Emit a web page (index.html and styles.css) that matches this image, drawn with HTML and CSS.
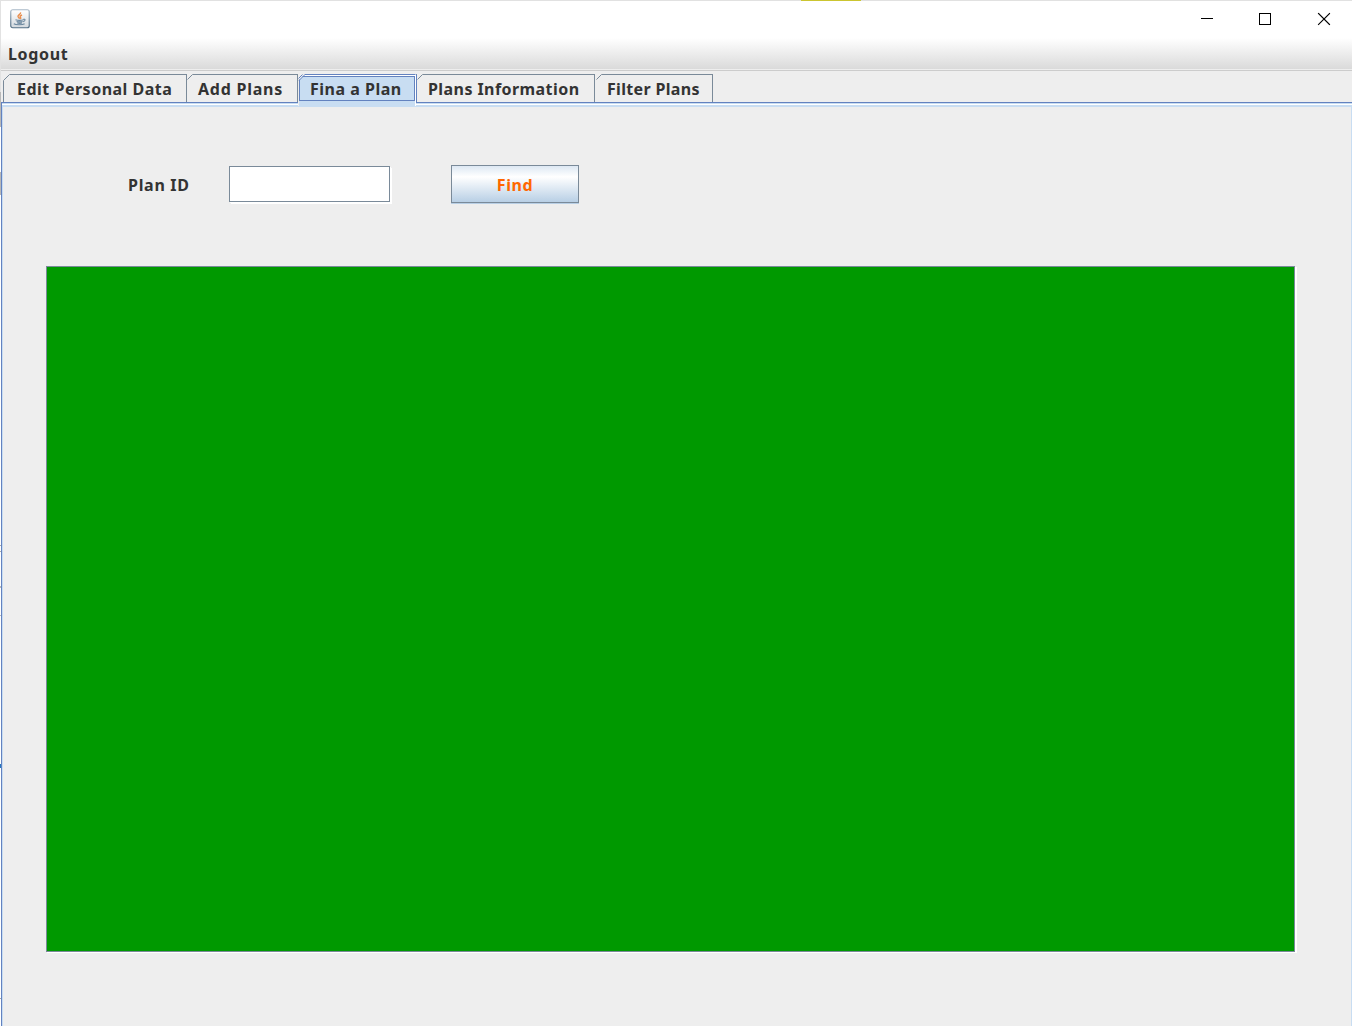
FILE: index.html
```html
<!DOCTYPE html>
<html lang="en">
<head>
<meta charset="utf-8">
<title>Find a Plan</title>
<link rel="stylesheet" href="styles.css">
</head>
<body>
<div class="screen">
  <div class="edge"></div>
  <div class="window">
    <header class="titlebar">
      <svg class="java" width="20" height="20" viewBox="0 0 20 20">
        <defs><linearGradient id="g" x1="0" y1="0" x2="0" y2="1"><stop offset="0" stop-color="#fff"/><stop offset="1" stop-color="#d3d9de"/></linearGradient>
        <linearGradient id="b" x1="0" y1="0" x2="0" y2="1"><stop offset="0" stop-color="#a9b9c7"/><stop offset="1" stop-color="#536f85"/></linearGradient></defs>
        <rect x=".75" y=".75" width="18.5" height="18" rx="2" fill="url(#g)" stroke="url(#b)" stroke-width="1.2"/>
        <path d="M10.5 3.4C11.2 5 7.8 6 8 7.5c.1 1 1.3 1.5 1.6 2.3M12 6C9.8 6.9 9.9 7.8 10.5 8.5c.5.6.2 1-.3 1.4" fill="none" stroke="#e98d4c" stroke-width="1.4"/>
        <path d="M5.5 10.8c2 .6 6 .6 8 0M6.6 12.4c1.8.6 4.3.6 6 0M7.2 13.9c1.5.5 3.5.5 4.8 0M13.3 10.4c2.4-.7 2.3 1.6-.2 2.3M3.8 14.7c1.8 1.4 8.8 1.4 10.8.1" fill="none" stroke="#6b879e" stroke-width="1.1"/>
      </svg>
      <svg class="controls" width="132" height="14" viewBox="0 0 132 14" fill="none" stroke="#000" shape-rendering="crispEdges">
        <path d="M0 6.5h12"/><rect x="58.5" y="1.5" width="11" height="11"/>
        <path d="M117.5 1.5l11 11M128.5 1.5l-11 11" shape-rendering="auto" stroke-width="1.1" stroke-linecap="square"/>
      </svg>
    </header>
    <nav class="menubar"><span class="label logout">Logout</span></nav>
    <div class="tabs">
      <div class="tab t1"><svg class="cut" width="7" height="7"><path d="M0 0H7L0 7Z" fill="#eee"/><path d="M.5 6.5L6.5.5" stroke="#7a8a99"/></svg><span class="label">Edit Personal Data</span></div>
      <div class="tab t2"><svg class="cut" width="6" height="6"><path d="M0 0H6L0 6Z" fill="#eee"/><path d="M.5 5.5L5.5 .5" stroke="#7a8a99"/></svg><span class="label">Add Plans</span></div>
      <div class="tab t3 active"><svg class="cut" width="8" height="8"><path d="M0 0H7L0 7Z" fill="#eee"/><path d="M.5 4.5L4.5 .5M1 6.5L6.5 1" stroke="#6382bf"/></svg><div class="focus"><span class="label">Fina a Plan</span></div></div>
      <div class="tab t4"><svg class="cut" width="6" height="6"><path d="M0 0H6L0 6Z" fill="#eee"/><path d="M.5 5.5L5.5 .5" stroke="#7a8a99"/></svg><span class="label">Plans Information</span></div>
      <div class="tab t5"><svg class="cut" width="7" height="6"><path d="M0 0H7L1 6H0Z" fill="#eee"/><path d="M1.5 5.5L6.5 .5" stroke="#7a8a99"/></svg><span class="label">Filter Plans</span></div>
    </div>
    <main class="panel">
      <div class="form">
        <label class="label plan" for="plan-id">Plan ID</label>
        <input class="field" id="plan-id" type="text">
        <button class="find" type="button"><span class="label">Find</span></button>
      </div>
      <div class="results"></div>
    </main>
  </div>
  <div class="accent"></div>
</div>
</body>
</html>
```
FILE: styles.css
```css
* { box-sizing: border-box; }
body { margin: 0; overflow: hidden; background: #eee; color: #333; font: 700 16px "Noto Sans", sans-serif; }
.screen { position: relative; display: flex; width: 1352px; height: 1026px; }
.edge { width: 1px; background: linear-gradient(#e2e2e2 0 92px, #b8b8b8 92px 127px, #fff 127px 172px, #b8b8b8 172px 195px, #fff 195px 545px, #aaa 545px 546px, #fff 546px 551px, #aaa 551px 552px, #fff 552px 586px, #bbb 586px 588px, #fff 588px 615px, #bbb 615px 616px, #fff 616px 764px, #2878c0 764px 768px, #fff 768px 998px, #aaa 998px 999px, #fff 999px); }
.window { width: 1351px; display: flex; flex-direction: column; }
.titlebar { height: 38px; border-top: 1px solid #e1e1e1; background: #fff; display: flex; justify-content: space-between; padding: 8px 19px 0 9px; }
.controls { margin-top: 3px; }
.menubar { height: 33px; padding: 5px 0 0 7px; background: linear-gradient(#fff, #dadada 31px, #eee 31px 32px, #ccc 32px); }
.label { display: block; white-space: nowrap; line-height: 22px; letter-spacing: .6px; }
.logout { letter-spacing: .68px; }
.tabs { height: 31px; padding: 3px 0 0 2px; display: flex; background: #eee; }
.tab { position: relative; height: 28px; border-top: 1px solid #7a8a99; border-right: 1px solid #7a8a99; padding: 3px 0 0 11px; }
.cut { position: absolute; left: 0; top: -1px; }
.t1 { width: 184px; padding-left: 13px; border-left: 1px solid #7a8a99; }
.t1 .cut { left: -1px; }
.t1 .label { letter-spacing: .5px; }
.t2 { width: 111px; }
.t2 .label { letter-spacing: .75px; }
.t3 { width: 118px; }
.t3 .label { letter-spacing: .5px; }
.t4 { width: 179px; border-left: 1px solid #6382bf; }
.t4 .label { letter-spacing: .43px; }
.t5 { width: 118px; padding-left: 12px; }
.t5 .label { letter-spacing: .33px; }
.active { z-index: 1; height: 32px; padding: 1px 0 0 1px; background: linear-gradient(#fff 1px, transparent 1px), linear-gradient(90deg, #eee 1px, #c8ddf2 1px); border-top: 1px solid #6382bf; border-right: 1px solid #fff; }
.focus { width: 116px; height: 25px; border: 1px solid #6382bf; padding: 1px 0 0 10px; }
.panel { flex: 1; border-left: 1px solid #6382bf; background: linear-gradient(90deg, #c8ddf2 0 1px, transparent 1px 1349px, #c8ddf2 1349px) 0 5px no-repeat, linear-gradient(#6382bf 0 1px, #c8ddf2 1px 2px, #fff 2px 3px, #c8ddf2 3px 5px, #eee 5px); }
.form { display: flex; align-items: flex-start; padding: 63px 0 0 126px; height: 164px; }
.plan { width: 101px; margin-top: 9px; letter-spacing: .7px; }
.field { width: 161px; height: 36px; margin-top: 1px; border: 1px solid #7a8a99; background: #fff; padding: 0 5px; font: inherit; outline: 0; box-shadow: 1px 1px #fff, 2px 2px #fff; }
.find { width: 128px; height: 38px; margin-left: 61px; padding: 1px 0 0; border: 1px solid #7a8a99; background: linear-gradient(#dde8f3, #fff 30%, #b8cfe5); box-shadow: 0 1px #b8cfe5; color: #ff6600; font: inherit; }
.find .label { position: static; padding-top: 1px; }
.results { width: 1249px; height: 686px; margin-left: 44px; border: 1px solid #7a8a99; background: #090; box-shadow: 1px 1px #fff, 2px 1px #fff; }
.accent { position: absolute; left: 801px; top: 0; width: 60px; height: 1px; background: #cbc530; }
```
